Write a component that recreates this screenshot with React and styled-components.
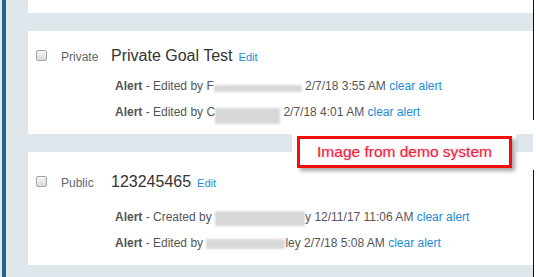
import styled, { createGlobalStyle } from "styled-components";

const GlobalStyle = createGlobalStyle`
    html, body {
        margin: 0;
        padding: 0;
        background: #ffffff;
    }
    body {
        font-family: "Liberation Sans", Arial, sans-serif;
    }
`;

const Page = styled.div`
    position: relative;
    display: flex;
    width: 536px;
    height: 277px;
    overflow: hidden;
    background: #ffffff;
`;

const Rail = styled.div`
    display: flex;
    width: 28px;
    flex-shrink: 0;
    padding-left: 2px;
    box-sizing: border-box;
    background: #dfe7ed;
`;

const Stripe = styled.div`
    width: 4px;
    background: #1e6489;
`;

const Main = styled.div`
    display: flex;
    flex-direction: column;
    gap: 18px;
    width: 505px;
    flex-shrink: 0;
    padding-bottom: 12px;
    box-sizing: border-box;
    background: #dfe7ed;
`;

const PrevCard = styled.div`
    height: 13px;
    background: #ffffff;
`;

const Card = styled.div`
    display: flex;
    flex-direction: column;
    background: #ffffff;
    padding: ${({ $top }) => $top}px 0 9px 8px;
`;

const EdgeLine = styled.div`
    width: 1px;
    flex-shrink: 0;
    background: linear-gradient(
        to bottom,
        #111 0,
        #111 120px,
        transparent 120px,
        transparent 170px,
        #111 170px
    );
`;

const Header = styled.div`
    display: flex;
    align-items: baseline;
    height: 20px;
    line-height: 20px;
    margin-bottom: ${({ $gap }) => $gap}px;
`;

const Checkbox = styled.span`
    display: inline-block;
    width: 11px;
    height: 11px;
    box-sizing: border-box;
    border: 1px solid #a3a3a3;
    border-radius: 2px;
    background: linear-gradient(#f6f6f6, #dadada);
`;

const Privacy = styled.span`
    width: 50px;
    margin-left: 14px;
    font-size: 12px;
    color: #666;
`;

const Title = styled.span`
    font-size: 16px;
    color: #333;
`;

const Edit = styled.a`
    margin-left: 6px;
    font-size: 11px;
    color: #1a8cd8;
    text-decoration: none;
`;

const AlertRow = styled.div`
    height: 26px;
    line-height: 26px;
    padding-left: 79px;
    font-size: 12px;
    color: #555;
    white-space: nowrap;
`;

const Bold = styled.b`
    font-weight: bold;
`;

const Smudge = styled.span`
    display: inline-block;
    width: ${({ $w }) => $w}px;
    height: ${({ $h }) => $h}px;
    vertical-align: ${({ $v }) => $v}px;
    background: #d8d8d8;
    filter: blur(1px);
`;

const ClearLink = styled.a`
    color: #1a8cd8;
    text-decoration: none;
`;

const Note = styled.div`
    position: absolute;
    left: 292px;
    top: 131px;
    width: 224px;
    height: 41px;
    padding: 5px 4px 4px 5px;
    box-sizing: border-box;
    background: #ffffff;
`;

const NoteBox = styled.div`
    display: flex;
    align-items: center;
    justify-content: center;
    height: 32px;
    box-sizing: border-box;
    border: 3px solid #f20d0d;
    background: #ffffff;
    box-shadow: 3px 3px 4px rgba(0, 0, 0, 0.35);
    font-size: 15.5px;
    color: #e8283f;
    text-shadow: 0 0 2px rgba(255, 40, 90, 0.45);
    white-space: nowrap;
`;

const alertLines = [
    [
        { verb: "Edited", pre: "F", w: 88, h: 7, v: -2, post: "", date: "2/7/18 3:55 AM" },
        { verb: "Edited", pre: "C", w: 65, h: 16, v: -8, post: "", date: "2/7/18 4:01 AM" },
    ],
    [
        { verb: "Created", pre: "", w: 90, h: 15, v: -5, post: "y", date: "12/11/17 11:06 AM" },
        { verb: "Edited", pre: "", w: 79, h: 10, v: -2, post: "ley", date: "2/7/18 5:08 AM" },
    ],
];

const goals = [
    { privacy: "Private", title: "Private Goal Test", top: 15, gap: 7 },
    { privacy: "Public", title: "123245465", top: 20, gap: 12 },
];

const Alert = ({ a }) => (
    <AlertRow>
        <Bold>Alert</Bold> - {a.verb} by {a.pre}
        <Smudge $w={a.w} $h={a.h} $v={a.v} />
        {a.post} {a.date} <ClearLink href="#">clear alert</ClearLink>
    </AlertRow>
);

const App = () => {
    return (
        <Page>
            <GlobalStyle />
            <Rail>
                <Stripe />
            </Rail>
            <Main>
                <PrevCard />
                {goals.map((g, i) => (
                    <Card key={g.title} $top={g.top}>
                        <Header $gap={g.gap}>
                            <Checkbox />
                            <Privacy>{g.privacy}</Privacy>
                            <Title>{g.title}</Title>
                            <Edit href="#">Edit</Edit>
                        </Header>
                        {alertLines[i].map((a, j) => (
                            <Alert key={j} a={a} />
                        ))}
                    </Card>
                ))}
            </Main>
            <EdgeLine />
            <Note>
                <NoteBox>Image from demo system</NoteBox>
            </Note>
        </Page>
    );
};

export default App;
